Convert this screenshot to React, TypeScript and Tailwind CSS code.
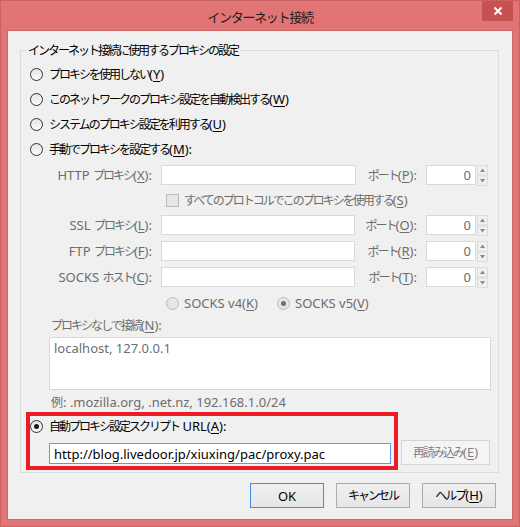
import React from 'react';

const J: React.FC<{ children: React.ReactNode }> = ({ children }) => (
  <span className="text-[12px] tracking-[-2px]">{children}</span>
);

const Key: React.FC<{ children: React.ReactNode }> = ({ children }) => (
  <span className="underline underline-offset-[2px]">{children}</span>
);

const Radio: React.FC<{ checked?: boolean; disabled?: boolean }> = ({ checked, disabled }) => (
  <span
    className={`flex h-[13px] w-[13px] shrink-0 items-center justify-center rounded-full border ${
      disabled ? 'border-[#bcbcbc] bg-[#e6e6e6]' : 'border-[#333333] bg-gradient-to-b from-[#e4e4e4] to-[#fbfbfb]'
    }`}
  >
    {checked && (
      <span className={`h-[5px] w-[5px] rounded-full ${disabled ? 'bg-[#6f6f6f]' : 'bg-[#1a1a1a]'}`} />
    )}
  </span>
);

const Spinner = () => (
  <svg width="11" height="21" viewBox="0 0 11 21" className="ml-[1px] shrink-0">
    <rect x="0.5" y="0.5" width="10" height="9.5" fill="#f0f0f0" stroke="#dcdcdc" />
    <rect x="0.5" y="11" width="10" height="9.5" fill="#f0f0f0" stroke="#dcdcdc" />
    <path d="M3 7 L8 7 L5.5 3.5 Z" fill="#8a8a8a" />
    <path d="M3 14 L8 14 L5.5 17.5 Z" fill="#8a8a8a" />
  </svg>
);

interface ProxyRowProps {
  label: React.ReactNode;
  portKey: string;
  wide?: boolean;
}

const ProxyRow: React.FC<ProxyRowProps> = ({ label, portKey, wide }) => (
  <div className="flex h-[20px] items-center text-[#6d6d6d]">
    <div className="w-[131px] text-right">{label}</div>
    <div className={`ml-[9px] h-[20px] border border-[#d9d9d9] bg-white ${wide ? 'w-[195px]' : 'w-[194px]'}`} />
    <div className={`text-right ${wide ? 'w-[61px]' : 'w-[62px]'}`}>
      <J>ポート</J>(<Key>{portKey}</Key>):
    </div>
    <div className="ml-[9px] flex h-[20px] w-[50px] items-center justify-end border border-[#d9d9d9] bg-white pr-[4px]">
      0
    </div>
    <Spinner />
  </div>
);

const Button: React.FC<{ children: React.ReactNode; primary?: boolean }> = ({ children, primary }) => (
  <button
    className={`flex h-[25px] w-[74px] items-center justify-center border bg-gradient-to-b from-[#f0f0f0] to-[#e5e5e5] ${
      primary ? 'border-[#3c8ee0]' : 'border-[#acacac]'
    }`}
  >
    {children}
  </button>
);

export default function App() {
  return (
    <div className="h-[527px] w-[520px] border border-[#c96262] bg-[#e17474] font-['Noto_Sans','Noto_Sans_CJK_JP',sans-serif] text-[13px] leading-[16px] text-black">
      {/* title bar */}
      <div className="grid h-[29px] grid-cols-[1fr_auto_1fr]">
        <div />
        <div className="pt-[7px] text-[13px] leading-[18px] tracking-[-1.3px] text-[#1e1e1e]">インターネット接続</div>
        <div className="flex justify-end pr-[6px]">
          <div className="flex h-[20px] w-[31px] items-center justify-center bg-[#c75050]">
            <svg width="10" height="10" viewBox="0 0 10 10">
              <path d="M1.5 1.5 L8.5 8.5 M8.5 1.5 L1.5 8.5" stroke="white" strokeWidth="2" />
            </svg>
          </div>
        </div>
      </div>

      {/* client area */}
      <div className="ml-[6px] h-[490px] w-[506px] border border-[#c86a6a] bg-[#f0f0f0]">
        <fieldset className="ml-[12px] mt-[11px] w-[479px] border border-[#dcdcdc] pb-[2px]">
          <legend className="ml-[5px] px-[2px] leading-[16px]">
            <J>インターネット接続に使用するプロキシの設定</J>
          </legend>

          <div className="pt-[3px]">
            <div className="flex h-[25px] items-center gap-[6px] pl-[9px]">
              <Radio />
              <span>
                <J>プロキシを使用しない</J>(<Key>Y</Key>)
              </span>
            </div>
            <div className="flex h-[25px] items-center gap-[6px] pl-[9px]">
              <Radio />
              <span>
                <J>このネットワークのプロキシ設定を自動検出する</J>(<Key>W</Key>)
              </span>
            </div>
            <div className="flex h-[25px] items-center gap-[6px] pl-[9px]">
              <Radio />
              <span>
                <J>システムのプロキシ設定を利用する</J>(<Key>U</Key>)
              </span>
            </div>
            <div className="flex h-[25px] items-center gap-[6px] pl-[9px]">
              <Radio />
              <span>
                <J>手動でプロキシを設定する</J>(<Key>M</Key>):
              </span>
            </div>
          </div>

          <div className="mt-[3px]">
            <ProxyRow
              wide
              portKey="P"
              label={
                <>
                  HTTP <J>プロキシ</J>(<Key>X</Key>):
                </>
              }
            />
            <div className="flex h-[30px] items-center gap-[5px] pl-[145px] text-[#6d6d6d]">
              <span className="h-[13px] w-[13px] border border-[#bcbcbc] bg-[#e6e6e6]" />
              <span>
                <J>すべてのプロトコルでこのプロキシを使用する</J>(<Key>S</Key>)
              </span>
            </div>
            <ProxyRow
              portKey="O"
              label={
                <>
                  SSL <J>プロキシ</J>(<Key>L</Key>):
                </>
              }
            />
            <div className="mt-[6px]">
              <ProxyRow
                portKey="R"
                label={
                  <>
                    FTP <J>プロキシ</J>(<Key>F</Key>):
                  </>
                }
              />
            </div>
            <div className="mt-[6px]">
              <ProxyRow
                portKey="T"
                label={
                  <>
                    SOCKS <J>ホスト</J>(<Key>C</Key>):
                  </>
                }
              />
            </div>
            <div className="mt-[6px] flex h-[20px] items-center pl-[145px] text-[#6d6d6d]">
              <div className="flex w-[111px] items-center gap-[5px]">
                <Radio disabled />
                <span>
                  SOCKS v4(<Key>K</Key>)
                </span>
              </div>
              <div className="flex items-center gap-[5px]">
                <Radio disabled checked />
                <span>
                  SOCKS v5(<Key>V</Key>)
                </span>
              </div>
            </div>
          </div>

          <div className="mt-[4px] pl-[30px] text-[#6d6d6d]">
            <J>プロキシなしで接続</J>(<Key>N</Key>):
          </div>
          <div className="ml-[28px] mt-[3px] h-[53px] w-[442px] border border-[#d9d9d9] bg-white px-[4px] pt-[2px] text-[#6d6d6d]">
            localhost, 127.0.0.1
          </div>
          <div className="mt-[4px] pl-[30px] text-[#6d6d6d]">
            <span className="text-[12px]">例</span>: .mozilla.org, .net.nz, 192.168.1.0/24
          </div>

          <div className="ml-[5px] mt-[1px] flex items-end">
            <div className="h-[58px] w-[372px] border-[4px] border-[#ec1c24]">
              <div className="flex h-[20px] items-center gap-[6px]">
                <Radio checked />
                <span>
                  <J>自動プロキシ設定スクリプト</J> URL(<Key>A</Key>):
                </span>
              </div>
              <div className="ml-[19px] mt-[7px] flex h-[21px] w-[342px] items-center border border-[#569de5] bg-white px-[4px]">
                http://blog.livedoor.jp/xiuxing/pac/proxy.pac
              </div>
            </div>
            <div className="mb-[5px] ml-[3px] flex h-[25px] w-[89px] items-center justify-center border border-[#d5d5d5] bg-[#f4f4f4] text-[#838383]">
              <span>
                <J>再読み込み</J>(<Key>E</Key>)
              </span>
            </div>
          </div>
        </fieldset>

        <div className="mt-[10px] flex justify-end gap-[12px] pr-[16px]">
          <Button primary>OK</Button>
          <Button>
            <J>キャンセル</J>
          </Button>
          <Button>
            <span>
              <J>ヘルプ</J>(<Key>H</Key>)
            </span>
          </Button>
        </div>
      </div>
    </div>
  );
}
